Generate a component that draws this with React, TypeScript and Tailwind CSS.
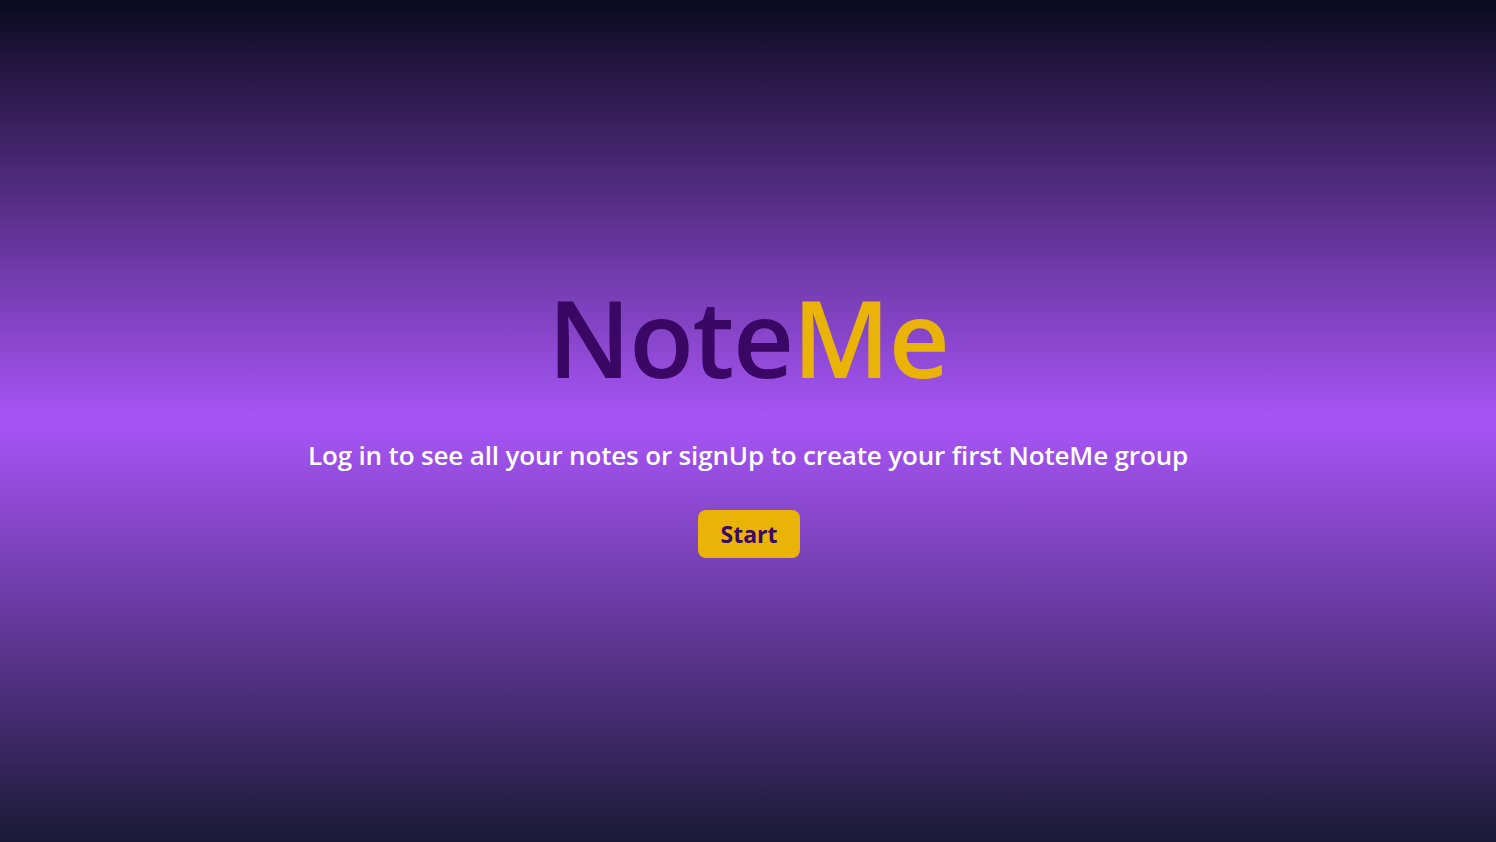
import React from "react";

export default function App() {
  return (
    <div
      className="min-h-screen w-full flex flex-col items-center justify-center bg-[linear-gradient(to_bottom,#0a0a1e_0%,#a855f7_50%,#1a1a36_100%)]"
      style={{ fontFamily: '"Open Sans", "Noto Sans", sans-serif' }}
    >
      <h1 className="text-[106px] leading-none font-semibold tracking-[-1.5px]">
        <span className="text-[#3b0764]">Note</span>
        <span className="text-[#eab308]">Me</span>
      </h1>
      <p className="mt-[52px] text-[26px] leading-none font-semibold text-white tracking-[-0.15px]">
        Log in to see all your notes or signUp to create your first NoteMe group
      </p>
      <button className="mt-[42px] ml-[2px] w-[102px] h-[48px] rounded-lg bg-[#eab308] text-[#3b0764] text-[23px] font-bold flex items-center justify-center">
        Start
      </button>
    </div>
  );
}
